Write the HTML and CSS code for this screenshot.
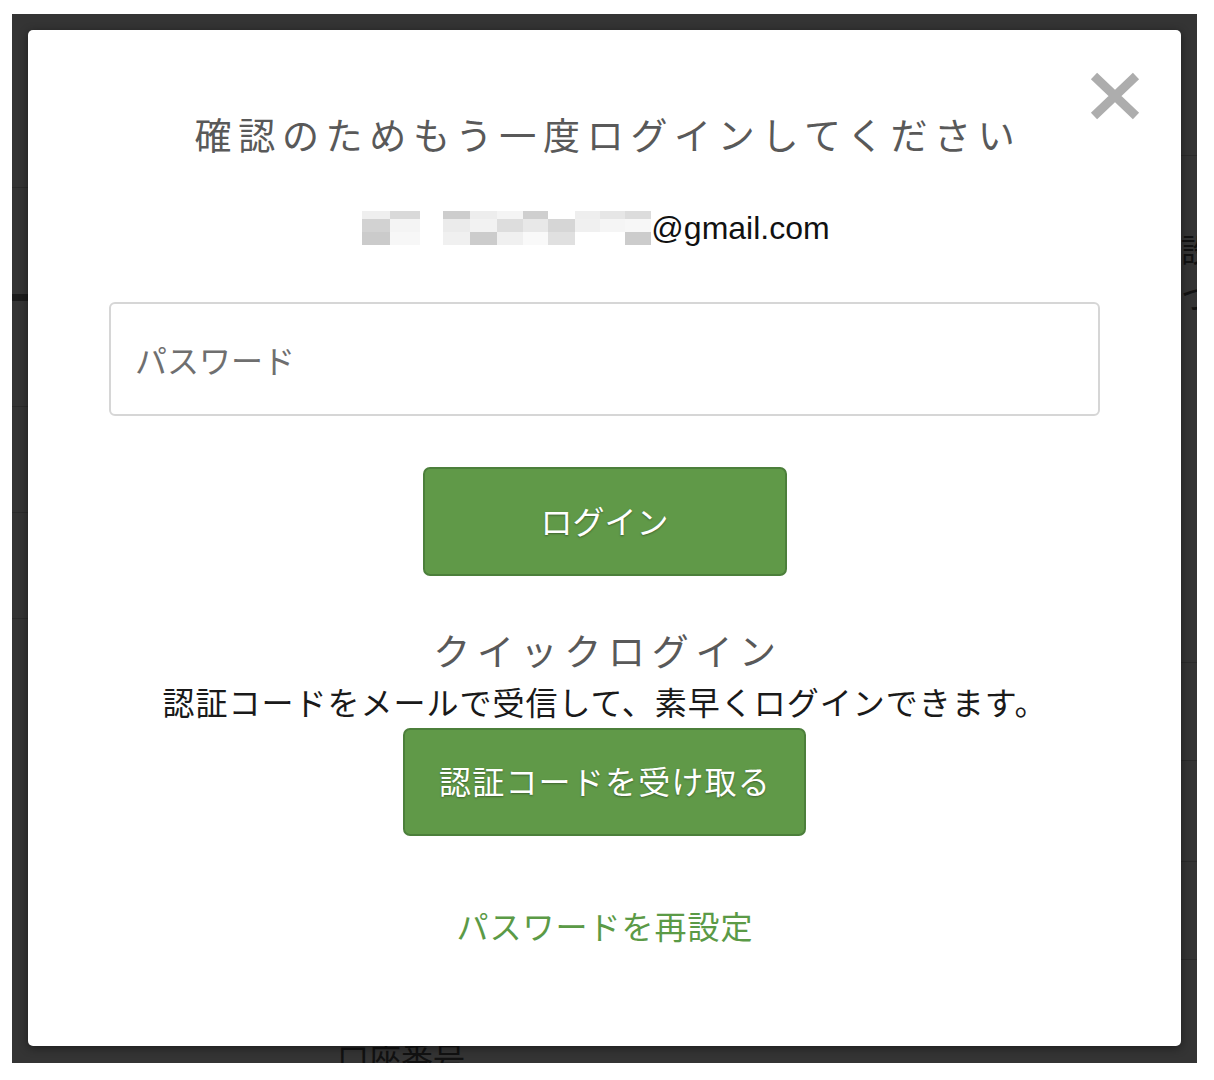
FILE: index.html
```html
<!DOCTYPE html>
<html lang="ja">
<head>
    <meta charset="UTF-8">
    <meta name="viewport" content="width=device-width, initial-scale=1.0">
    <title>再ログイン</title>
    <link rel="stylesheet" href="styles.css">
</head>
<body>
    <div class="page">
        <!-- dimmed page behind the dialog -->
        <div class="page-side">
            <div class="side-row" style="height: 173px;"></div>
            <div class="side-row side-row-dark" style="height: 106px;"></div>
            <div class="side-row" style="height: 105px;"></div>
            <div class="side-row" style="height: 105px;"></div>
            <div class="side-row" style="height: 105px;"></div>
        </div>
        <div class="page-main">
            <div class="main-row main-row-line" style="height: 141px;"></div>
            <div class="main-row main-text-right main-text-first">設定</div>
            <div class="main-row main-text-right main-text-small">つ</div>
            <div class="main-row main-row-line" style="height: 346px;"></div>
            <div class="main-row main-row-line" style="height: 97px;"></div>
            <div class="main-row main-row-line" style="height: 100px;"></div>
            <div class="main-row main-row-line" style="height: 97px;"></div>
            <div class="main-row main-label">口座番号</div>
        </div>

        <div class="modal">
            <button class="close-btn" type="button" aria-label="閉じる">
                <svg width="50" height="48" viewBox="0 0 50 48">
                    <path d="M4 4 L46 44 M46 4 L4 44" stroke="#adadad" stroke-width="9" fill="none"/>
                </svg>
            </button>

            <h2 class="modal-title">確認のためもう一度ログインしてください</h2>

            <div class="account">
                <svg class="masked" width="289" height="34" viewBox="0 0 289 34">
                    <rect x="0" y="0" width="28" height="8" fill="#efefef"/>
                    <rect x="28" y="0" width="30" height="8" fill="#d9d9d9"/>
                    <rect x="81" y="0" width="27" height="8" fill="#cdcdcd"/>
                    <rect x="108" y="0" width="27" height="8" fill="#ededed"/>
                    <rect x="135" y="0" width="26" height="8" fill="#f4f4f4"/>
                    <rect x="161" y="0" width="25" height="8" fill="#cfcfcf"/>
                    <rect x="213" y="0" width="25" height="8" fill="#eeeeee"/>
                    <rect x="238" y="0" width="25" height="8" fill="#e6e6e6"/>
                    <rect x="263" y="0" width="26" height="8" fill="#dcdcdc"/>
                    <rect x="0" y="8" width="28" height="13" fill="#d2d2d2"/>
                    <rect x="28" y="8" width="30" height="13" fill="#f4f4f4"/>
                    <rect x="81" y="8" width="27" height="13" fill="#ebebeb"/>
                    <rect x="108" y="8" width="27" height="13" fill="#f2f2f2"/>
                    <rect x="135" y="8" width="26" height="13" fill="#dddddd"/>
                    <rect x="161" y="8" width="25" height="13" fill="#e8e8e8"/>
                    <rect x="186" y="8" width="27" height="13" fill="#d6d6d6"/>
                    <rect x="213" y="8" width="25" height="13" fill="#f0f0f0"/>
                    <rect x="238" y="8" width="25" height="13" fill="#f5f5f5"/>
                    <rect x="263" y="8" width="26" height="13" fill="#f7f7f7"/>
                    <rect x="0" y="21" width="28" height="13" fill="#cbcbcb"/>
                    <rect x="28" y="21" width="30" height="13" fill="#f7f7f7"/>
                    <rect x="81" y="21" width="27" height="13" fill="#f0f0f0"/>
                    <rect x="108" y="21" width="27" height="13" fill="#cccccc"/>
                    <rect x="135" y="21" width="26" height="13" fill="#f0f0f0"/>
                    <rect x="161" y="21" width="25" height="13" fill="#f9f9f9"/>
                    <rect x="186" y="21" width="27" height="13" fill="#e0e0e0"/>
                    <rect x="263" y="21" width="26" height="13" fill="#cccccc"/>
                </svg><span class="account-domain">@gmail.com</span>
            </div>

            <form class="login-form">
                <input class="password-input" type="password" placeholder="パスワード">
                <button class="green-btn login-btn" type="submit">ログイン</button>
            </form>

            <h3 class="quick-title">クイックログイン</h3>
            <p class="quick-text">認証コードをメールで受信して、素早くログインできます。</p>
            <button class="green-btn code-btn" type="button">認証コードを受け取る</button>

            <a class="reset-link" href="#">パスワードを再設定</a>
        </div>
    </div>
</body>
</html>
```

FILE: styles.css
```css
body {
    margin: 0;
    background: #fff;
    font-family: "Noto Sans CJK JP", "Noto Sans", sans-serif;
}

.page {
    position: relative;
    display: flex;
    width: 1185px;
    height: 1049px;
    margin: 14px 0 0 12px;
    background: #343434;
    overflow: hidden;
}

/* background page (dimmed) */
.page-side {
    width: 256px;
    flex-shrink: 0;
}

.side-row {
    border-bottom: 1px solid #2b2b2b;
}

.side-row-dark {
    border-bottom: 7px solid #1c1c1c;
}

.page-main {
    flex: 1;
    display: flex;
    flex-direction: column;
}

.main-row-line {
    border-bottom: 1px solid #2b2b2b;
}

.main-text-right {
    padding-left: 913px;
    white-space: nowrap;
    font-size: 32px;
    line-height: 56px;
    color: #111;
}

.main-text-first {
    margin-top: 64px;
}

.main-text-small {
    line-height: 40px;
}

.main-label {
    margin-top: auto;
    margin-bottom: -12px;
    padding-left: 69px;
    font-size: 32px;
    line-height: 36px;
    color: #111;
}

/* dialog */
.modal {
    position: absolute;
    top: 16px;
    left: 16px;
    right: 16px;
    bottom: 17px;
    display: flex;
    flex-direction: column;
    align-items: center;
    padding: 79px 81px 0;
    background: #fff;
    border-radius: 5px;
    box-shadow: 0 2px 10px rgba(0, 0, 0, 0.45);
}

.close-btn {
    position: absolute;
    top: 42px;
    right: 41px;
    padding: 0;
    border: none;
    background: none;
    cursor: pointer;
}

.close-btn svg {
    display: block;
}

.modal-title {
    margin: 0;
    padding-left: 7px;
    font-size: 37px;
    font-weight: 400;
    line-height: 50px;
    letter-spacing: 6.7px;
    color: #595959;
}

.account {
    display: flex;
    align-items: center;
    margin-top: 49px;
    padding-right: 17px;
    height: 40px;
}

.masked {
    display: block;
}

.account-domain {
    font-family: "Liberation Sans", Arial, sans-serif;
    font-size: 32px;
    color: #111;
}

.login-form {
    display: flex;
    flex-direction: column;
    align-items: center;
    width: 100%;
    margin-top: 54px;
}

.password-input {
    box-sizing: border-box;
    width: 100%;
    height: 114px;
    padding: 0 24px;
    border: 2px solid #d6d6d6;
    border-radius: 6px;
    font-family: inherit;
    font-size: 32px;
    color: #333;
}

.password-input::placeholder {
    color: #6f6f6f;
}

.green-btn {
    box-sizing: border-box;
    border: 2px solid #4c7f3b;
    border-radius: 7px;
    background-color: #609948;
    color: #fff;
    font-family: inherit;
    font-size: 32px;
    text-shadow: 0 1px 2px rgba(0, 0, 0, 0.35);
    cursor: pointer;
}

.login-btn {
    width: 364px;
    height: 109px;
    margin-top: 51px;
    padding-bottom: 4px;
}

.quick-title {
    margin: 49px 0 0;
    padding-left: 7px;
    font-size: 37px;
    font-weight: 400;
    line-height: 50px;
    letter-spacing: 6.7px;
    color: #595959;
}

.quick-text {
    margin: 6px 0 0;
    padding-left: 1px;
    font-size: 32px;
    line-height: 40px;
    letter-spacing: 1px;
    color: #1a1a1a;
    white-space: nowrap;
}

.code-btn {
    width: 403px;
    height: 108px;
    margin-top: 7px;
    padding: 0 0 4px 1px;
    letter-spacing: 1.2px;
}

.reset-link {
    margin-top: 69px;
    padding-left: 1px;
    font-size: 32px;
    line-height: 40px;
    letter-spacing: 1px;
    color: #5b9a46;
    text-decoration: none;
}
```
